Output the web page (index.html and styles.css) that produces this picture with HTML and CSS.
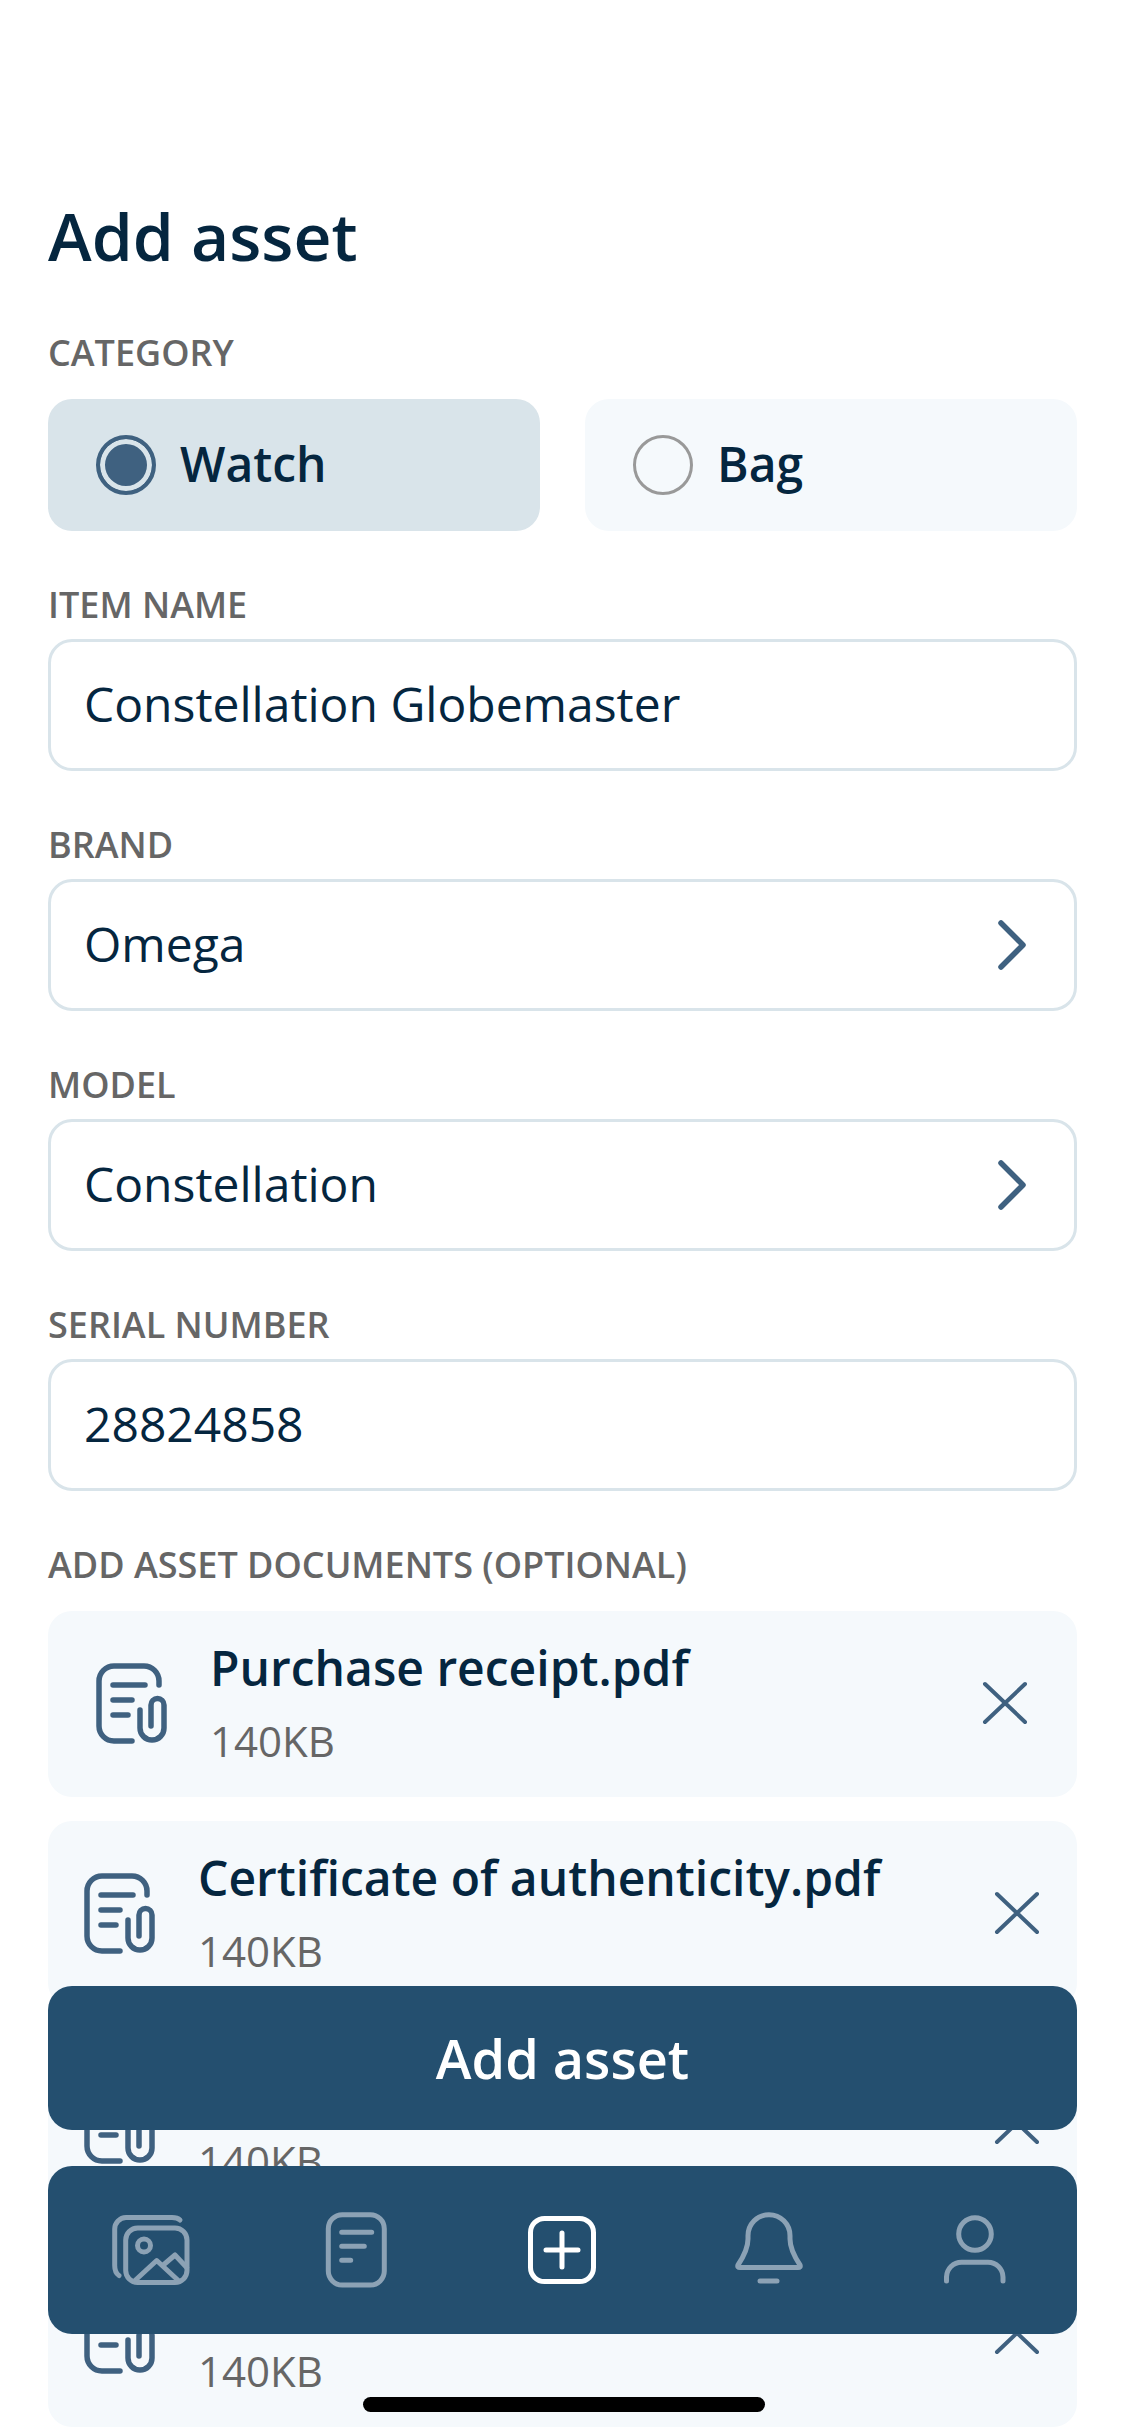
FILE: index.html
```html
<!DOCTYPE html>
<html lang="en">
<head>
<meta charset="utf-8">
<title>Add asset</title>
<link rel="stylesheet" href="styles.css">
</head>
<body>
<svg class="sprites" width="0" height="0" aria-hidden="true">
  <symbol id="doc-clip" viewBox="0 0 72 86">
    <path d="M63 25V21A15 15 0 0 0 48 6H18A15 15 0 0 0 3 21V66A15 15 0 0 0 18 81H36M17 25H49M17 40H36M17 55H32M44 50V68A12 12 0 0 0 68 68V45A6.5 6.5 0 0 0 55 45V66"/>
  </symbol>
  <symbol id="close" viewBox="0 0 48 48">
    <path d="M4 5L44 43M44 5L4 43"/>
  </symbol>
  <symbol id="chevron" viewBox="0 0 32 50">
    <path d="M5 3L27 25L5 47"/>
  </symbol>
</svg>
<main class="screen">
  <h1 class="title">Add asset</h1>

  <section class="group">
    <div class="label">CATEGORY</div>
    <div class="choices">
      <div class="choice choice-on"><span class="radio radio-on"></span><span>Watch</span></div>
      <div class="choice"><span class="radio"></span><span>Bag</span></div>
    </div>
  </section>

  <section class="group">
    <div class="label">ITEM NAME</div>
    <div class="field"><span>Constellation Globemaster</span></div>
  </section>

  <section class="group">
    <div class="label">BRAND</div>
    <div class="field"><span>Omega</span><svg class="chev"><use href="#chevron"/></svg></div>
  </section>

  <section class="group">
    <div class="label">MODEL</div>
    <div class="field"><span>Constellation</span><svg class="chev"><use href="#chevron"/></svg></div>
  </section>

  <section class="group">
    <div class="label">SERIAL NUMBER</div>
    <div class="field"><span>28824858</span></div>
  </section>

  <section class="group">
    <div class="label">ADD ASSET DOCUMENTS (OPTIONAL)</div>
    <div class="docs">
      <div class="doc doc-first">
        <svg class="doc-icon"><use href="#doc-clip"/></svg>
        <div class="doc-text"><div class="doc-name">Purchase receipt.pdf</div><div class="doc-size">140KB</div></div>
        <svg class="doc-x"><use href="#close"/></svg>
      </div>
      <div class="doc">
        <svg class="doc-icon"><use href="#doc-clip"/></svg>
        <div class="doc-text"><div class="doc-name">Certificate of authenticity.pdf</div><div class="doc-size">140KB</div></div>
        <svg class="doc-x"><use href="#close"/></svg>
      </div>
      <div class="doc">
        <svg class="doc-icon"><use href="#doc-clip"/></svg>
        <div class="doc-text"><div class="doc-name">Appraisal.pdf</div><div class="doc-size">140KB</div></div>
        <svg class="doc-x"><use href="#close"/></svg>
      </div>
      <div class="doc">
        <svg class="doc-icon"><use href="#doc-clip"/></svg>
        <div class="doc-text"><div class="doc-name">Insurance.pdf</div><div class="doc-size">140KB</div></div>
        <svg class="doc-x"><use href="#close"/></svg>
      </div>
    </div>
  </section>
</main>

<div class="submit">Add asset</div>

<nav class="tabbar">
  <div class="tab">
    <svg class="tab-icon" viewBox="0 0 80 80"><path d="M69 10C67 8 65 7.500 61 7.500H15A11.500 11.500 0 0 0 3.700 19V55.500C3.700 60.500 5 63.500 8 65.500"/><rect x="14.700" y="18" width="61.300" height="54.500" rx="12"/><circle cx="33" cy="35.500" r="6.500"/><path d="M24 70.500L45.700 50.500L67.300 70.500M52.300 55L64 45L75.700 57.500"/></svg>
  </div>
  <div class="tab">
    <svg class="tab-icon" viewBox="0 0 80 80"><rect x="11.300" y="4.700" width="56" height="70.300" rx="14"/><path d="M24.700 22.300H54.700M24.700 36.300H47.300M24.700 50.300H33.700"/></svg>
  </div>
  <div class="tab tab-on">
    <svg class="tab-icon" viewBox="0 0 80 80"><rect x="8.500" y="8.500" width="63" height="63" rx="14"/><path d="M24 40H56M40 23V57"/></svg>
  </div>
  <div class="tab">
    <svg class="tab-icon" viewBox="0 0 80 80"><path d="M41 4.700A21 21 0 0 0 20 25.700V29C20 38 16 46 10 55Q9 57.500 12 57.500H70Q73 57.500 72 55C66 46 62 38 62 29V25.700A21 21 0 0 0 41 4.700Z"/><path d="M32 71H49"/></svg>
  </div>
  <div class="tab">
    <svg class="tab-icon" viewBox="0 0 80 80"><circle cx="41" cy="24" r="16.300"/><path d="M12.500 71V67A15 15 0 0 1 27.500 52.300H54A15 15 0 0 1 69 67V71"/></svg>
  </div>
</nav>

<div class="home-bar"></div>
</body>
</html>
```

FILE: styles.css
```css
* { box-sizing: border-box; }
html, body { margin: 0; padding: 0; }
body {
  width: 1125px;
  height: 2436px;
  position: relative;
  overflow: hidden;
  background: #fff;
  font-family: "Open Sans", "Noto Sans", sans-serif;
  color: #05263f;
}
.sprites { position: absolute; }
.screen { padding: 190px 48px 0; }
.title { margin: 0; font-size: 66px; line-height: 90px; font-weight: 600; }
.group { margin-top: 51px; }
.group:first-of-type { margin-top: 50px; }
.label {
  font-size: 36px;
  line-height: 45px;
  font-weight: 600;
  color: #666;
  margin-bottom: 12px;
}
.choices { display: flex; gap: 45px; padding-top: 12px; }
.choice {
  flex: 1;
  height: 132px;
  padding-left: 48px;
  display: flex;
  align-items: center;
  gap: 24px;
  border-radius: 24px;
  background: #f5f9fc;
  font-size: 48px;
  font-weight: 600;
}
.choice span:last-child { margin-bottom: 3px; }
.choice-on { background: #d9e4ea; }
.radio {
  width: 60px;
  height: 60px;
  border-radius: 50%;
  border: 3px solid #999;
  flex: none;
}
.radio-on {
  border: 4px solid #3f6180;
  background: #3f6180;
  box-shadow: inset 0 0 0 5px #d9e4ea;
}
.field {
  height: 132px;
  padding: 0 46px 0 33px;
  display: flex;
  align-items: center;
  justify-content: space-between;
  border: 3px solid #d9e4ea;
  border-radius: 24px;
  font-size: 48px;
}
.field span { margin-bottom: 3px; }
.chev {
  width: 32px;
  height: 50px;
  fill: none;
  stroke: #3f6180;
  stroke-width: 5.500;
  stroke-linecap: round;
  stroke-linejoin: round;
}
.docs { display: flex; flex-direction: column; gap: 24px; padding-top: 12px; }
.doc {
  height: 186px;
  padding: 0 36px;
  display: flex;
  align-items: center;
  border-radius: 24px;
  background: #f5f9fc;
}
.doc-first { padding: 0 48px; }
.doc-icon {
  width: 72px;
  height: 86px;
  flex: none;
  margin-bottom: 2px;
  fill: none;
  stroke: #3f6180;
  stroke-width: 5.500;
  stroke-linecap: round;
  stroke-linejoin: round;
}
.doc-text { flex: 1; margin-left: 42px; margin-bottom: 2px; }
.doc-name { font-size: 48px; line-height: 62px; font-weight: 600; }
.doc-size { font-size: 42px; line-height: 58px; color: #666; margin-top: 13px; }
.doc-x {
  width: 48px;
  height: 48px;
  flex: none;
  margin-bottom: 2px;
  fill: none;
  stroke: #3f6180;
  stroke-width: 4;
  stroke-linecap: round;
}
.submit {
  position: absolute;
  left: 48px;
  right: 48px;
  top: 1986px;
  height: 144px;
  display: flex;
  align-items: center;
  justify-content: center;
  border-radius: 24px;
  background: #244f6f;
  color: #fff;
  font-size: 54px;
  font-weight: 600;
}
.tabbar {
  position: absolute;
  left: 48px;
  right: 48px;
  top: 2166px;
  height: 168px;
  display: flex;
  align-items: center;
  border-radius: 24px;
  background: #244f6f;
}
.tab { flex: 1; display: flex; justify-content: center; }
.tab-icon {
  width: 80px;
  height: 80px;
  fill: none;
  stroke: #8ca2b5;
  stroke-width: 5;
  stroke-linecap: round;
  stroke-linejoin: round;
}
.tab-on .tab-icon { stroke: #fff; }
.home-bar {
  position: absolute;
  left: 363px;
  top: 2397px;
  width: 402px;
  height: 15px;
  border-radius: 8px;
  background: #000;
}
```
